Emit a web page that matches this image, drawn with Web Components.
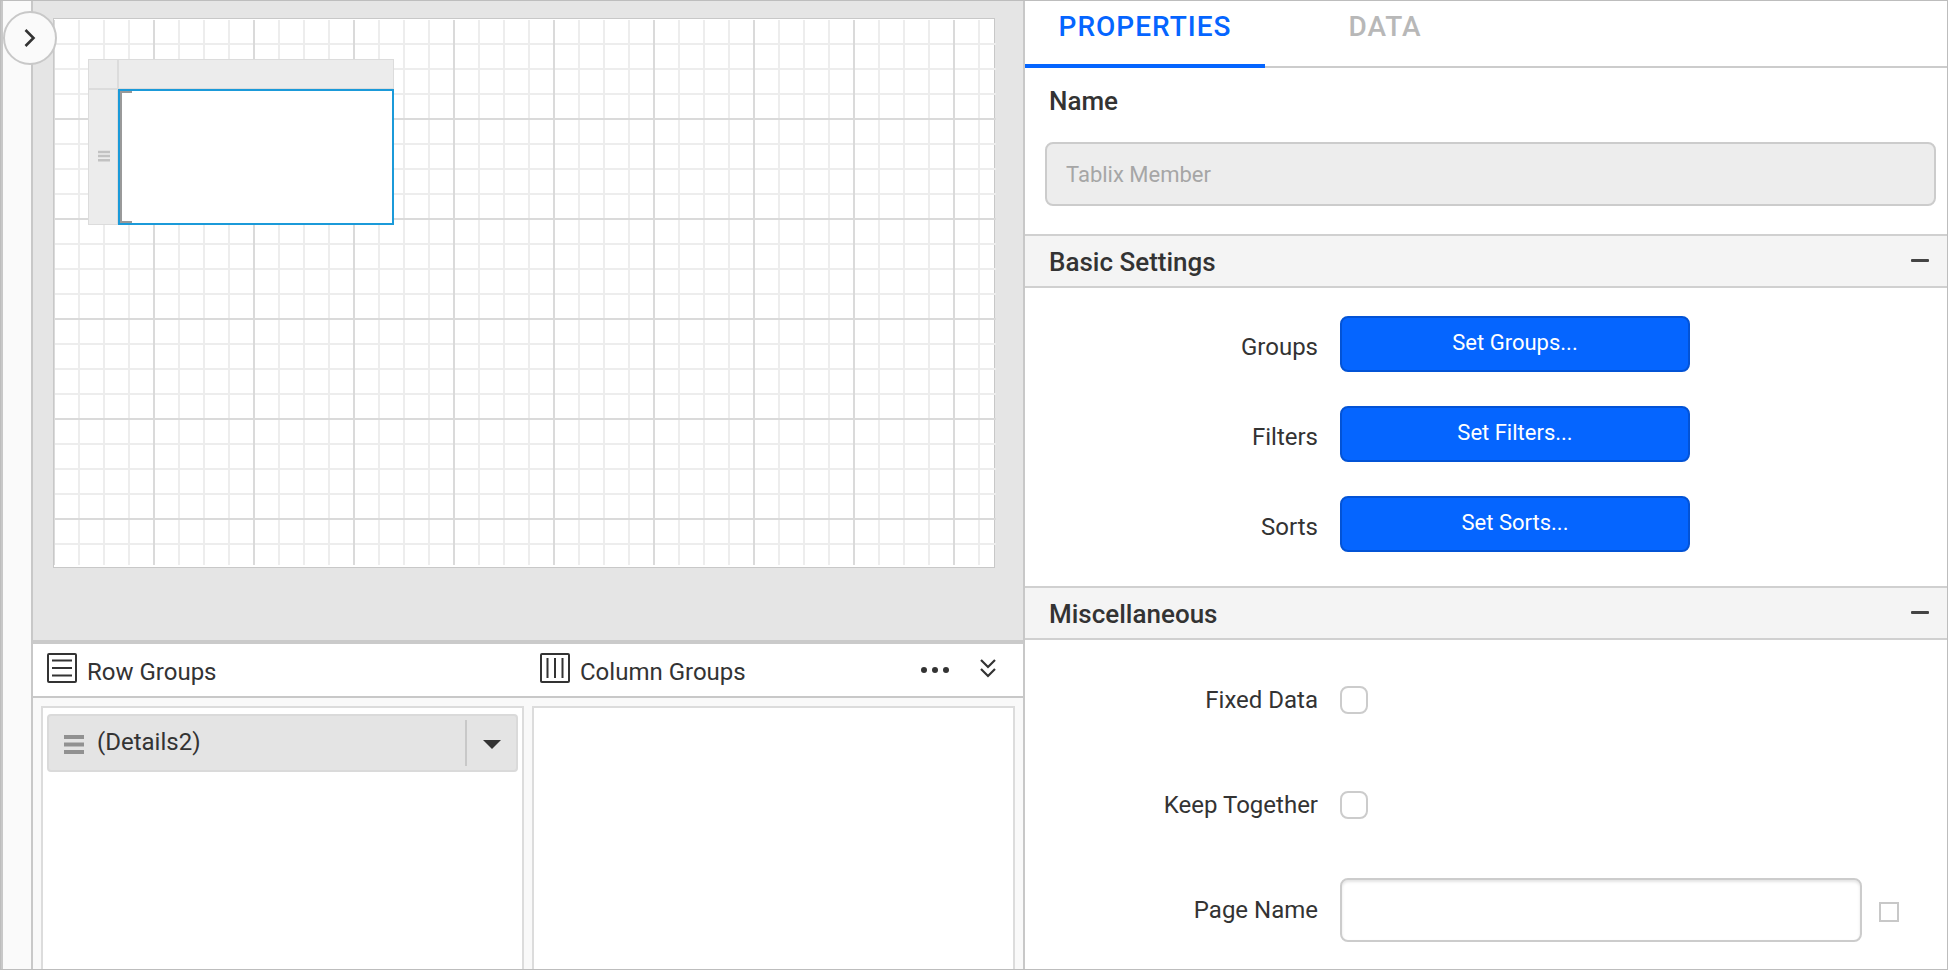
<!DOCTYPE html>
<html lang="en">
<head>
<meta charset="utf-8">
<title>Report Designer</title>
<style>
  html, body { margin: 0; }
  body {
    --line: #c8c8c8;
    --line-soft: #dcdcdc;
    --ink: #333;
    --accent: #0565ff;
    font-family: Roboto, "Liberation Sans", sans-serif;
    font-size: 24px;
    line-height: 28px;
    color: var(--ink);
    background: #fff;
  }
</style>
</head>
<body>
<report-designer>
  <side-rail slot="rail"></side-rail>
  <design-canvas slot="design"><tablix-item></tablix-item></design-canvas>
  <group-panel slot="design"><group-item slot="rows">(Details2)</group-item></group-panel>
  <property-tabs slot="properties"></property-tabs>
  <name-field slot="properties" label="Name" value="Tablix Member"></name-field>
  <property-section slot="properties" heading="Basic Settings">
    <action-row label="Groups" action="Set Groups..."></action-row>
    <action-row label="Filters" action="Set Filters..."></action-row>
    <action-row label="Sorts" action="Set Sorts..."></action-row>
  </property-section>
  <property-section slot="properties" heading="Miscellaneous">
    <check-row label="Fixed Data"></check-row>
    <check-row label="Keep Together"></check-row>
    <text-row label="Page Name"></text-row>
  </property-section>
</report-designer>

<script>
const define = (name, render) => customElements.define(name, class extends HTMLElement {
  connectedCallback() {
    if (this.shadowRoot) return;
    this.attachShadow({ mode: 'open' }).innerHTML =
      '<style>*{box-sizing:border-box}button,input{font:inherit;margin:0}button{cursor:pointer}</style>' + render(this);
  }
});

define('report-designer', () => `
  <style>
    :host { display: grid; box-sizing: border-box; min-height: 100vh; border: 1px solid #bdbdbd;
      grid-template-columns: 32px minmax(0, 992fr) minmax(0, 922fr); }
    .design { display: flex; flex-direction: column; border-right: 2px solid var(--line); }
  </style>
  <slot name="rail"></slot>
  <main class="design"><slot name="design"></slot></main>
  <aside><slot name="properties"></slot></aside>`);

define('side-rail', () => `
  <style>
    :host { display: block; position: relative; z-index: 1; background: #fafafa;
      border: solid var(--line); border-width: 0 2px; }
    button { position: absolute; left: 0; top: 10px; width: 54px; height: 54px; padding: 0;
      display: grid; place-items: center; border: 2px solid var(--line); border-radius: 50%; background: #fafafa; }
    svg { display: block; }
  </style>
  <button type="button" aria-label="Expand panel">
    <svg width="50" height="50" viewBox="0 0 50 50" fill="none" stroke="#333" stroke-width="2.6"><path d="M20.500 17l8 8-8 8"/></svg>
  </button>`);

define('design-canvas', () => `
  <style>
    :host { display: block; padding: 17px 28px 72px 20px; background: #e5e5e5; border-bottom: 4px solid #cacaca; }
    .page { position: relative; height: 550px; border: 1px solid var(--line); background: #fff; }
    .grid { position: absolute; inset: 1px -2px 2px 0;
      background:
        linear-gradient(90deg, #dadada 2px, transparent 2px) -1px 0 / 100px 100%,
        linear-gradient(#dadada 2px, transparent 2px) 0 -2px / 100% 100px,
        linear-gradient(90deg, #ededed 2px, transparent 2px) -1px 0 / 25px 100%,
        linear-gradient(#ededed 2px, transparent 2px) 0 -2px / 100% 25px; }
    ::slotted(tablix-item) { position: absolute; left: 34px; top: 40px; }
  </style>
  <div class="page"><div class="grid"></div><slot></slot></div>`);

define('tablix-item', () => `
  <style>
    :host { display: grid; box-sizing: border-box; width: 306px; height: 166px;
      grid-template: 30px 136px / 30px 276px; background: #ececec; }
    div { border: 1px solid var(--line-soft); }
    .row { display: grid; place-items: center; padding: 0 0 2px 2px; }
    .cell { border: 2px solid #1b9ad9; background: #fff; }
    .cell i { display: block; width: 12px; height: 100%; border: 2px solid #999; border-right: 0; }
    svg { display: block; }
  </style>
  <div></div><div></div>
  <div class="row"><svg width="12" height="12" fill="#c2c2c2"><path d="M0 .7h12v2.500H0zM0 4.800h12v2.500H0zM0 8.900h12v2.500H0z"/></svg></div>
  <div class="cell"><i></i></div>`);

define('group-panel', () => `
  <style>
    :host { display: flex; flex-direction: column; flex: 1; }
    header { display: grid; grid-template-columns: 1fr 1fr; height: 54px; background: #fff; border-bottom: 2px solid var(--line); }
    .head { display: flex; align-items: flex-start; padding: 9px 26px 0 14px; }
    .head + .head { padding-left: 12px; }
    h2 { flex: 1; margin: 5px 0 0 10px; font: inherit; }
    svg { display: block; }
    button { padding: 0; border: 0; background: none; }
    button + button { margin-left: 29px; }
    .lists { flex: 1; display: grid; grid-template-columns: 1fr 1fr; gap: 8px; padding: 8px 8px 0; background: #f9f9f9; }
    .list { padding: 6px 4px; border: 2px solid var(--line-soft); border-bottom: 0; background: #fff; }
  </style>
  <header>
    <div class="head">
      <svg width="30" height="30" fill="none" stroke="#333" stroke-width="2"><rect x="1" y="1" width="28" height="28" rx="1"/><path d="M5 7.500h20M5 15h20M5 22.500h20"/></svg>
      <h2>Row Groups</h2>
    </div>
    <div class="head">
      <svg width="30" height="30" fill="none" stroke="#333" stroke-width="2"><rect x="1" y="1" width="28" height="28" rx="1"/><path d="M7.500 5v20M15 5v20M22.500 5v20"/></svg>
      <h2>Column Groups</h2>
      <button type="button" aria-label="More options"><svg width="30" height="34" fill="#333"><circle cx="4" cy="17" r="3"/><circle cx="15" cy="17" r="3"/><circle cx="26" cy="17" r="3"/></svg></button>
      <button type="button" aria-label="Collapse groups"><svg width="18" height="34" fill="none" stroke="#333" stroke-width="2.2"><path d="M2 7l7 7 7-7M2 16l7 7 7-7"/></svg></button>
    </div>
  </header>
  <div class="lists"><div class="list"><slot name="rows"></slot></div><div class="list"><slot name="columns"></slot></div></div>`);

define('group-item', () => `
  <style>
    :host { display: flex; box-sizing: border-box; align-items: center; height: 58px; padding: 0 0 0 15px;
      border: 2px solid #dadada; border-radius: 4px; background: #e4e4e4; }
    span { flex: 1; padding: 0 0 2px 13px; }
    button { width: 51px; height: 46px; padding: 0; display: grid; place-items: center;
      border: 0; border-left: 2px solid var(--line); background: none; }
    svg { display: block; }
  </style>
  <svg width="20" height="24" fill="#919191"><path d="M0 4h20v4H0zM0 11.500h20v4H0zM0 19h20v4H0z"/></svg>
  <span><slot></slot></span>
  <button type="button" aria-label="Group menu"><svg width="18" height="12" fill="#333"><path d="M0 3h18l-9 9z"/></svg></button>`);

define('property-tabs', () => `
  <style>
    :host { display: block; }
    nav { display: flex; height: 67px; border-bottom: 2px solid #ccc; }
    a { width: 240px; height: 67px; box-sizing: border-box; padding-top: 12px; text-align: center; text-decoration: none;
      font-size: 28px; font-weight: 500; letter-spacing: 1px; color: #b8b8b8; border-bottom: 4px solid transparent; }
    a[aria-current] { color: var(--accent); border-color: var(--accent); }
  </style>
  <nav><a href="#properties" aria-current="page">PROPERTIES</a><a href="#data">DATA</a></nav>`);

define('name-field', el => `
  <style>
    :host { display: block; padding: 19px 11px 28px 20px; }
    label { display: block; margin: 0 0 27px 4px; font-size: 26px; font-weight: 500; }
    input { display: block; width: 100%; height: 64px; padding: 0 19px; font-size: 22px; color: #a6a6a6;
      border: 2px solid #ccc; border-radius: 8px; background: #ededed; }
  </style>
  <label for="f">${el.getAttribute('label')}</label>
  <input id="f" type="text" value="${el.getAttribute('value')}" disabled>`);

define('property-section', el => `
  <style>
    :host { display: block; }
    header { display: flex; align-items: center; height: 54px; padding: 0 18px 0 24px;
      border: solid #d0d0d0; border-width: 2px 0; background: #f4f4f4; }
    h2 { flex: 1; margin: 0; padding-top: 2px; font-size: 26px; font-weight: 500; }
    button { padding: 0; border: 0; background: none; }
    svg { display: block; }
    .body { padding: 7px 0 21px; }
    :host(:last-child) .body { padding-bottom: 0; }
  </style>
  <header><h2>${el.getAttribute('heading')}</h2>
    <button type="button" aria-label="Collapse"><svg width="18" height="28"><rect y="12" width="18" height="3" rx="1" fill="#444"/></svg></button></header>
  <div class="body"><slot></slot></div>`);

const rowStyle = `
    :host { display: flex; align-items: center; box-sizing: border-box; padding-right: 48px; }
    .label { width: 293px; margin-right: 22px; text-align: right; }`;

define('action-row', el => `
  <style>${rowStyle}
    :host { height: 90px; padding-top: 8px; }
    .label { padding-top: 5px; }
    button { width: 350px; height: 56px; padding: 0 0 3px; font-size: 22px; color: #fff;
      border: 2px solid #0353d6; border-radius: 8px; background: var(--accent); }
  </style>
  <label class="label" for="b">${el.getAttribute('label')}</label><button id="b" type="button">${el.getAttribute('action')}</button>`);

define('check-row', el => `
  <style>${rowStyle}
    :host { height: 105px; }
    input { appearance: none; width: 28px; height: 28px; border: 2px solid #ccc; border-radius: 8px; background: #fff; }
  </style>
  <label class="label" for="c">${el.getAttribute('label')}</label><input id="c" type="checkbox">`);

define('text-row', el => `
  <style>${rowStyle}
    :host { height: 105px; }
    .text { flex: 1; min-width: 0; height: 64px; padding: 0 19px; border: 2px solid #ccc; border-radius: 8px;
      background: #fff; box-shadow: inset 0 2px 3px #e4e4e4; }
    .flag { appearance: none; width: 20px; height: 20px; margin: 4px 0 0 17px; border: 2px solid #c8c8c8; background: #fff; }
  </style>
  <label class="label" for="t">${el.getAttribute('label')}</label><input class="text" id="t" type="text">
  <input class="flag" type="checkbox" aria-label="Page name expression">`);
</script>
</body>
</html>
